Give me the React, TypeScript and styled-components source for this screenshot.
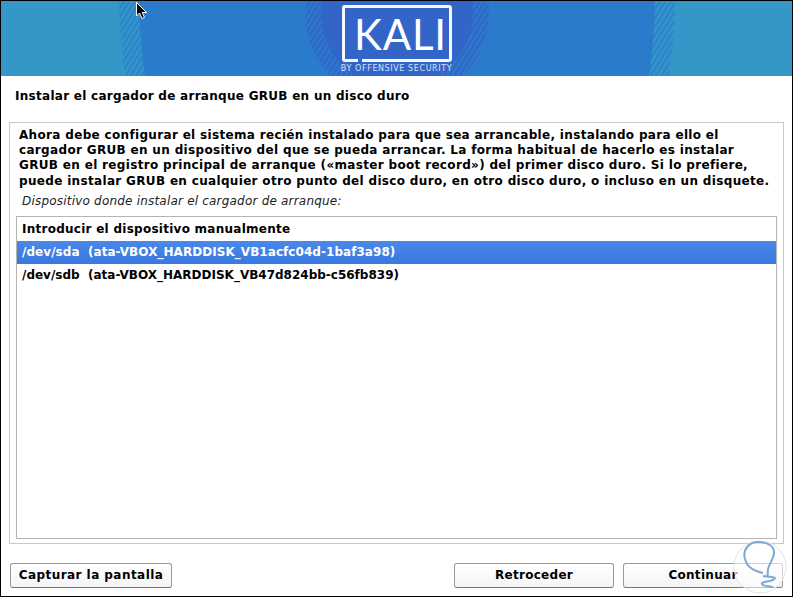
import React from 'react';
import styled, { createGlobalStyle } from 'styled-components';

const Global = createGlobalStyle`
  html, body { margin: 0; padding: 0; background: #000; }
  body { width: 793px; height: 597px; overflow: hidden; font-family: "DejaVu Sans", sans-serif; }
`;
const Screen = styled.div`
  position: relative; width: 793px; height: 597px; box-sizing: border-box;
  padding: 1px; background: #000; overflow: hidden;
`;
const Window = styled.div`
  width: 100%; height: 100%; background: #fff; display: flex; flex-direction: column;
`;
const Banner = styled.header`
  position: relative; height: 75px; flex: none; overflow: hidden; background: #3597c8;
  display: flex; justify-content: center;
`;
const BannerArt = styled.svg`
  position: absolute; left: 0; top: 0;
`;
const Logo = styled.div`
  position: relative; width: 110px; display: flex; flex-direction: column; align-items: center; margin-top: 4px;
`;
const LogoBox = styled.div`
  position: relative; box-sizing: border-box; width: 110px; height: 57px; flex: none; border: 3px solid #f6f8fd; border-radius: 3px;
  padding-left: 8px; display: flex; align-items: center; justify-content: center;
  color: #fff; font-family: Lato, sans-serif; font-weight: 400; font-size: 42px; letter-spacing: 0.8px; line-height: 1;
  &::after { content: ''; position: absolute; left: 13px; bottom: -3px; width: 4px; height: 3px; background: #3365c9; }
`;
const LogoTag = styled.div`
  color: #d5e1f5; font-family: "DejaVu Sans", sans-serif; font-size: 8px; letter-spacing: 0.6px; line-height: 9px; margin-top: 2px; white-space: nowrap;
`;
const Title = styled.h1`
  margin: 0; padding: 0 0 0 14px; height: 39px; flex: none; display: flex; align-items: center;
  font-size: 12px; font-weight: 700; color: #000; letter-spacing: 0.28px; white-space: nowrap;
`;
const Panel = styled.main`
  margin: 7px 8px 0 8px; height: 422px; box-sizing: border-box; border: 1px solid #c8c8c8; flex: none;
  padding: 5px 6px 4px 6px; display: flex; flex-direction: column;
`;
const Intro = styled.p`
  margin: 0 0 0 3px; font-size: 12px; font-weight: 700; line-height: 15.2px; color: #000; letter-spacing: 0.33px; white-space: pre;
`;
const Prompt = styled.div`
  margin: 3px 0 0 6px; height: 18px; font-size: 12px; line-height: 18px; font-style: italic; color: #222; letter-spacing: 0.2px; white-space: nowrap;
`;
const List = styled.ul`
  list-style: none; margin: 6px 0 0 0; padding: 1px 0 0 0; flex: 1; border: 1px solid #b4b4b4; display: flex; flex-direction: column;
`;
const Row = styled.li<{ $selected?: boolean; $spacing?: number }>`
  height: 23px; padding-left: 5px; display: flex; align-items: center; font-size: 12px; font-weight: 700; white-space: pre;
  letter-spacing: ${p => p.$spacing ?? 0.26}px;
  color: ${p => (p.$selected ? '#fff' : '#000')};
  background: ${p => (p.$selected ? 'linear-gradient(#4a88e8, #3878e0)' : 'transparent')};
`;
const Footer = styled.footer`
  flex: 1; display: flex; align-items: center; padding: 10px 9px 0 9px; gap: 9px;
`;
const Button = styled.button<{ $w: number; $push?: boolean; $spacing?: number }>`
  width: ${p => p.$w}px; height: 25px; box-sizing: border-box; padding: 0; border: 1px solid #9a9a9a; border-bottom-color: #777; border-radius: 3px;
  background: linear-gradient(#fff, #f4f4f4); color: #000; font-family: "DejaVu Sans", sans-serif; font-size: 12px; font-weight: 700;
  letter-spacing: ${p => p.$spacing ?? 0.3}px;
  margin-left: ${p => (p.$push ? 'auto' : '0')};
`;
const Cursor = styled.svg`
  position: absolute; left: 135px; top: 2px;
`;
const Watermark = styled.svg`
  position: absolute; left: 733px; top: 540px;
`;

export default function App() {
  return (
    <Screen>
      <Global />
      <Window>
        <Banner>
          <BannerArt width="791" height="75" viewBox="0 0 791 75">
            <defs>
              <pattern id="st" width="4.5" height="5" patternUnits="userSpaceOnUse" patternTransform="rotate(32)">
                <rect width="2.2" height="5" fill="#fff" />
              </pattern>
              <mask id="stm"><rect width="791" height="75" fill="url(#st)" /></mask>
            </defs>
            <ellipse cx="396" cy="-10" rx="278" ry="400" fill="#2b83cb" mask="url(#stm)" />
            <ellipse cx="396" cy="-10" rx="258" ry="400" fill="#2a7bcc" />
            <circle cx="396" cy="11" r="92" fill="#3365c9" mask="url(#stm)" />
            <circle cx="396" cy="11" r="76" fill="#3365c9" />
          </BannerArt>
          <Logo>
            <LogoBox>KALI</LogoBox>
            <LogoTag>BY OFFENSIVE SECURITY</LogoTag>
          </Logo>
        </Banner>
        <Title>Instalar el cargador de arranque GRUB en un disco duro</Title>
        <Panel>
          <Intro>{`Ahora debe configurar el sistema recién instalado para que sea arrancable, instalando para ello el
cargador GRUB en un dispositivo del que se pueda arrancar. La forma habitual de hacerlo es instalar
GRUB en el registro principal de arranque («master boot record») del primer disco duro. Si lo prefiere,
puede instalar GRUB en cualquier otro punto del disco duro, en otro disco duro, o incluso en un disquete.`}</Intro>
          <Prompt>Dispositivo donde instalar el cargador de arranque:</Prompt>
          <List>
            <Row>Introducir el dispositivo manualmente</Row>
            <Row $selected $spacing={0.05}>{'/dev/sda  (ata-VBOX_HARDDISK_VB1acfc04d-1baf3a98)'}</Row>
            <Row $spacing={0}>{'/dev/sdb  (ata-VBOX_HARDDISK_VB47d824bb-c56fb839)'}</Row>
          </List>
        </Panel>
        <Footer>
          <Button $w={162} $spacing={0.45}>Capturar la pantalla</Button>
          <Button $w={160} $push>Retroceder</Button>
          <Button $w={160}>Continuar</Button>
        </Footer>
      </Window>
      <Cursor width="14" height="18" viewBox="0 0 14 18">
        <path d="M1.5 0.5 L1.5 14 L4.5 11 L7 16.5 L9.5 15.5 L7.2 10.5 L11.5 10.5 Z" fill="#000" stroke="#fff" strokeWidth="1" />
      </Cursor>
      <Watermark width="54" height="54" viewBox="0 0 54 54">
        <circle cx="27" cy="27" r="26" fill="#fff" fillOpacity="0.55" stroke="#dbe7ee" strokeWidth="1" />
        <path d="M30 33 C22 31 14 28 12 19 C9 9 17 2 25 2 C34 2 41 6 41 12 C41 19 36 24 35 29 C35 32 35 34 34 37" fill="none" stroke="#7da9d3" strokeWidth="2" />
        <path d="M30 36 C33 37 38 36 42 38 C42 41 33 41 29 43 C28 46 34 46 40 47" fill="none" stroke="#7da9d3" strokeWidth="2" />
      </Watermark>
    </Screen>
  );
}
